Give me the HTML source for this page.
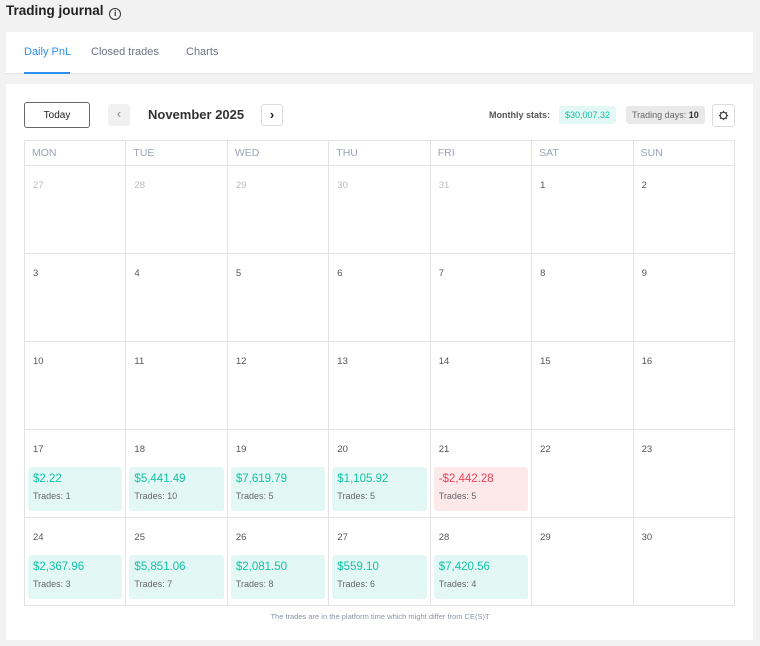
<!DOCTYPE html>
<html><head><meta charset="utf-8"><style>
*{box-sizing:border-box;margin:0;padding:0}
body{width:760px;height:646px;background:#f2f2f2;font-family:"Liberation Sans",sans-serif;color:#333;position:relative;overflow:hidden}
.title{position:absolute;left:6px;top:3px;font-size:13.5px;font-weight:bold;color:#222}
.info{display:inline-block;width:12px;height:12px;border:1.3px solid #333;border-radius:50%;font-size:8px;text-align:center;line-height:10px;vertical-align:-1px;margin-left:2px;font-weight:bold}
.tabs{position:absolute;left:6px;top:32px;width:747px;height:42px;background:#fff;border-bottom:1px solid #e4e4e4}
.tab{position:absolute;top:14px;font-size:11px;color:#6b7280}
.tab.a{color:#2b8ff0}
.ul{position:absolute;left:18px;top:40px;width:46px;height:2px;background:#2b8ff0}
.panel{position:absolute;left:6px;top:84px;width:747px;height:556px;background:#fff}
.today{position:absolute;left:24px;top:102px;width:66px;height:26px;border:1px solid #666;border-radius:3px;font-size:10px;text-align:center;line-height:24px;padding-top:1px;color:#222;background:#fff}
.nav{position:absolute;top:104px;width:22px;height:22px;border-radius:3px;text-align:center;line-height:20px;font-size:13px}
.month{position:absolute;left:148px;top:107px;font-size:13px;font-weight:bold;color:#333}
.ms{position:absolute;left:489px;top:110px;font-size:9px;color:#555;font-weight:bold}
.pill{position:absolute;top:106px;height:18px;border-radius:3px;font-size:9px;line-height:19px;padding:0 6px}
.gear{position:absolute;left:712px;top:104px;width:23px;height:23px;border:1px solid #ddd;border-radius:3px;background:#fff}
.grid{position:absolute;left:24px;top:140px;width:711px;display:grid;grid-template-columns:repeat(7,1fr);grid-template-rows:25px repeat(5,88px);border-left:1px solid #e3e3e3;border-top:1px solid #e3e3e3}
.grid>div{border-right:1px solid #e3e3e3;border-bottom:1px solid #e3e3e3;position:relative}
.h{font-size:10.5px;color:#9aa3b5;padding:6px 0 0 7px}
.d{font-size:9.5px;color:#555;padding:14px 0 0 8px}
.d.o{color:#bbb}
.b{position:absolute;left:3px;right:3px;top:37px;height:44px;border-radius:3px;background:#e3f8f5;padding:6px 0 0 5px}
.b.r{background:#fde8ea}
.b .v{font-size:11.5px;color:#12c3a5}
.b.r .v{color:#f0435a}
.b .t{font-size:9px;color:#666;margin-top:6px}
.foot{position:absolute;top:612px;left:0;width:760px;text-align:center;font-size:7.5px;color:#8a93a6}
</style></head><body>
<div class="title">Trading journal <span class="info">i</span></div>
<div class="tabs">
<span class="tab a" style="left:18px">Daily PnL</span>
<span class="tab" style="left:85px">Closed trades</span>
<span class="tab" style="left:180px">Charts</span>
<div class="ul"></div>
</div>
<div class="panel"></div>
<div class="today">Today</div>
<div class="nav" style="left:108px;background:#f0f0f0;color:#888">‹</div>
<div class="month">November 2025</div>
<div class="nav" style="left:261px;border:1px solid #ddd;background:#fff;color:#222;font-weight:bold">›</div>
<div class="ms">Monthly stats:</div>
<div class="pill" style="left:559px;background:#e3f8f5;color:#12c3a5">$30,007.32</div>
<div class="pill" style="left:626px;background:#e9e9e9;color:#666">Trading days: <b style="color:#333">10</b></div>
<div class="gear"><svg width="21" height="21" viewBox="0 0 21 21"><circle cx="10.5" cy="10.5" r="3.2" fill="none" stroke="#444" stroke-width="1.2"/><g stroke="#444" stroke-width="1.4"><line x1="10.5" y1="5.8" x2="10.5" y2="7.2"/><line x1="10.5" y1="13.8" x2="10.5" y2="15.2"/><line x1="5.8" y1="10.5" x2="7.2" y2="10.5"/><line x1="13.8" y1="10.5" x2="15.2" y2="10.5"/><line x1="7.2" y1="7.2" x2="8.1" y2="8.1"/><line x1="12.9" y1="12.9" x2="13.8" y2="13.8"/><line x1="13.8" y1="7.2" x2="12.9" y2="8.1"/><line x1="7.2" y1="13.8" x2="8.1" y2="12.9"/></g></svg></div>
<div class="grid">
<div class="h">MON</div><div class="h">TUE</div><div class="h">WED</div><div class="h">THU</div><div class="h">FRI</div><div class="h">SAT</div><div class="h">SUN</div>
<div class="d o">27</div><div class="d o">28</div><div class="d o">29</div><div class="d o">30</div><div class="d o">31</div><div class="d">1</div><div class="d">2</div>
<div class="d">3</div><div class="d">4</div><div class="d">5</div><div class="d">6</div><div class="d">7</div><div class="d">8</div><div class="d">9</div>
<div class="d">10</div><div class="d">11</div><div class="d">12</div><div class="d">13</div><div class="d">14</div><div class="d">15</div><div class="d">16</div>
<div class="d">17<div class="b"><div class="v">$2.22</div><div class="t">Trades: 1</div></div></div>
<div class="d">18<div class="b"><div class="v">$5,441.49</div><div class="t">Trades: 10</div></div></div>
<div class="d">19<div class="b"><div class="v">$7,619.79</div><div class="t">Trades: 5</div></div></div>
<div class="d">20<div class="b"><div class="v">$1,105.92</div><div class="t">Trades: 5</div></div></div>
<div class="d">21<div class="b r"><div class="v">-$2,442.28</div><div class="t">Trades: 5</div></div></div>
<div class="d">22</div><div class="d">23</div>
<div class="d">24<div class="b"><div class="v">$2,367.96</div><div class="t">Trades: 3</div></div></div>
<div class="d">25<div class="b"><div class="v">$5,851.06</div><div class="t">Trades: 7</div></div></div>
<div class="d">26<div class="b"><div class="v">$2,081.50</div><div class="t">Trades: 8</div></div></div>
<div class="d">27<div class="b"><div class="v">$559.10</div><div class="t">Trades: 6</div></div></div>
<div class="d">28<div class="b"><div class="v">$7,420.56</div><div class="t">Trades: 4</div></div></div>
<div class="d">29</div><div class="d">30</div>
</div>
<div class="foot">The trades are in the platform time which might differ from CE(S)T</div>
</body></html>
